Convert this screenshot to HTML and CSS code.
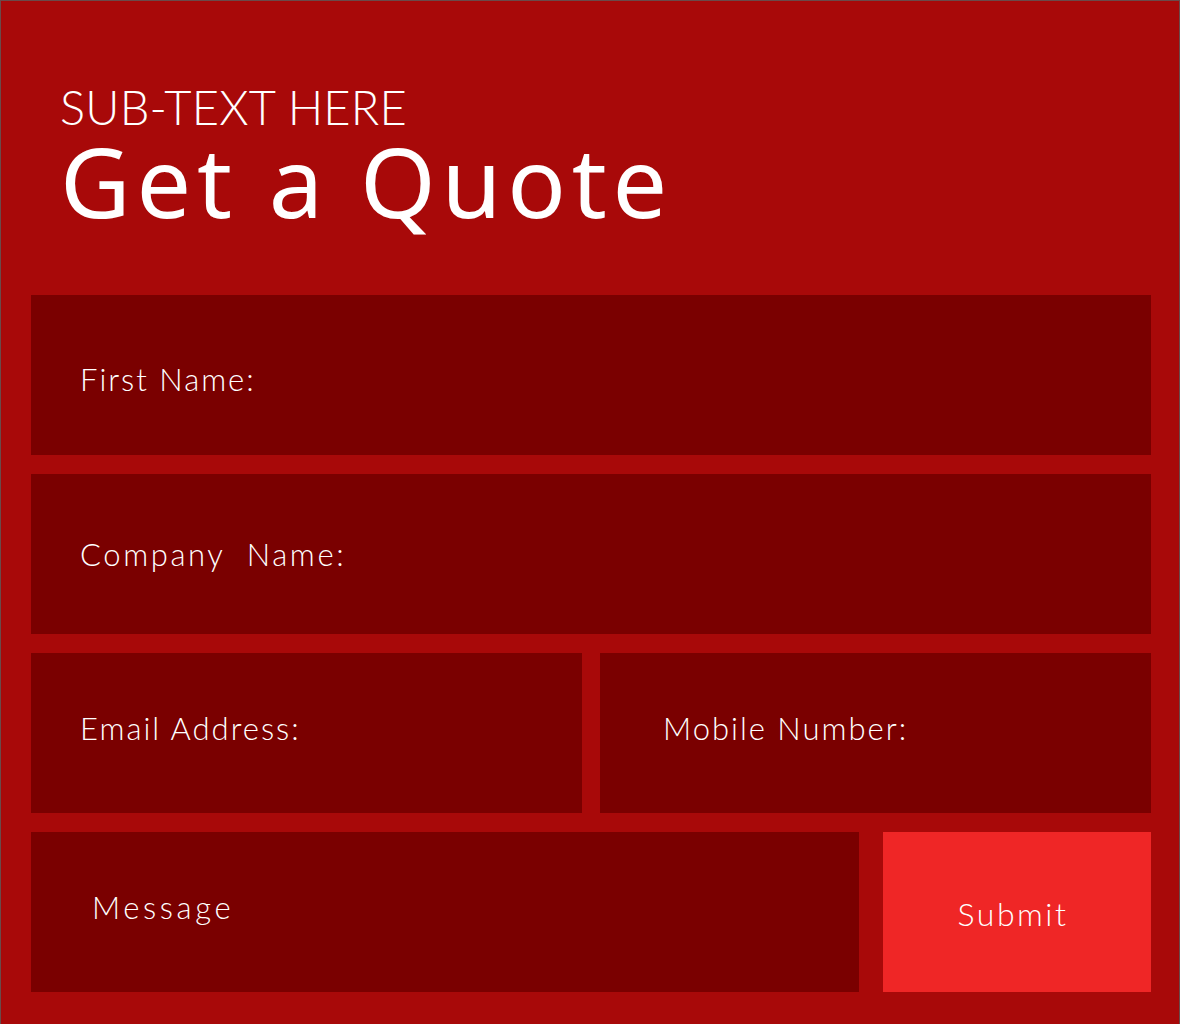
FILE: index.html
```html
<!DOCTYPE html>
<html lang="en">
<head>
<meta charset="utf-8">
<title>Get a Quote</title>
<link rel="stylesheet" href="styles.css">
</head>
<body>
<div class="frame">
  <header class="head">
    <p class="sub">SUB-TEXT HERE</p>
    <h1 class="title">Get a Quote</h1>
  </header>
  <form class="form">
    <div class="field f-first"><span class="label">First Name:</span></div>
    <div class="field f-company"><span class="label">Company&nbsp; Name:</span></div>
    <div class="row two">
      <div class="field f-email"><span class="label">Email Address:</span></div>
      <div class="field f-mobile"><span class="label">Mobile Number:</span></div>
    </div>
    <div class="row last">
      <div class="field f-message"><span class="label">Message</span></div>
      <button type="button" class="submit">Submit</button>
    </div>
  </form>
</div>
</body>
</html>
```
FILE: styles.css
```css
html, body {
  margin: 0;
  padding: 0;
  background: #a80909;
}
.frame {
  box-sizing: border-box;
  width: 1180px;
  height: 1024px;
  background: #a80909;
  border: 1px solid #6b4a4a;
  border-bottom: none;
  padding: 0 28px 0 30px;
  font-family: "Lato", "Liberation Sans", sans-serif;
  color: #ffffff;
}
.head {
  padding: 82px 0 0 29px;
  height: 294px;
  box-sizing: border-box;
}
.sub {
  margin: 0;
  font-size: 47px;
  font-weight: 300;
  line-height: 48px;
  letter-spacing: 0.2px;
}
.title {
  margin: 0;
  font-family: "Noto Sans", "Liberation Sans", sans-serif;
  font-weight: 400;
  font-size: 97px;
  line-height: 98px;
  letter-spacing: 5.8px;
}
.form {
  display: flex;
  flex-direction: column;
  gap: 19px;
}
.row {
  display: flex;
}
.row.two {
  display: grid;
  grid-template-columns: 1fr 1fr;
  gap: 18px;
}
.row.last { gap: 24px; }
.field {
  height: 160px;
  background: #7a0000;
  display: flex;
  align-items: center;
  box-sizing: border-box;
}
.f-first, .f-company, .f-email { padding-left: 49px; }
.f-first { padding-top: 8px; }
.f-email, .f-mobile { padding-bottom: 11px; }
.f-mobile { padding-left: 63px; }
.f-message { width: 828px; padding-left: 61px; padding-bottom: 10px; }
.label {
  font-size: 31px;
  font-weight: 300;
  letter-spacing: 2px;
}
.f-company .label { letter-spacing: 2.6px; }
.f-message .label { letter-spacing: 3.6px; }
.submit {
  flex: 1;
  height: 160px;
  margin: 0;
  border: none;
  background: #ef2626;
  color: #ffffff;
  font-family: "Lato", "Liberation Sans", sans-serif;
  font-weight: 300;
  font-size: 32px;
  letter-spacing: 2.5px;
  padding: 2px 8px 0 0;
  cursor: pointer;
}
```
